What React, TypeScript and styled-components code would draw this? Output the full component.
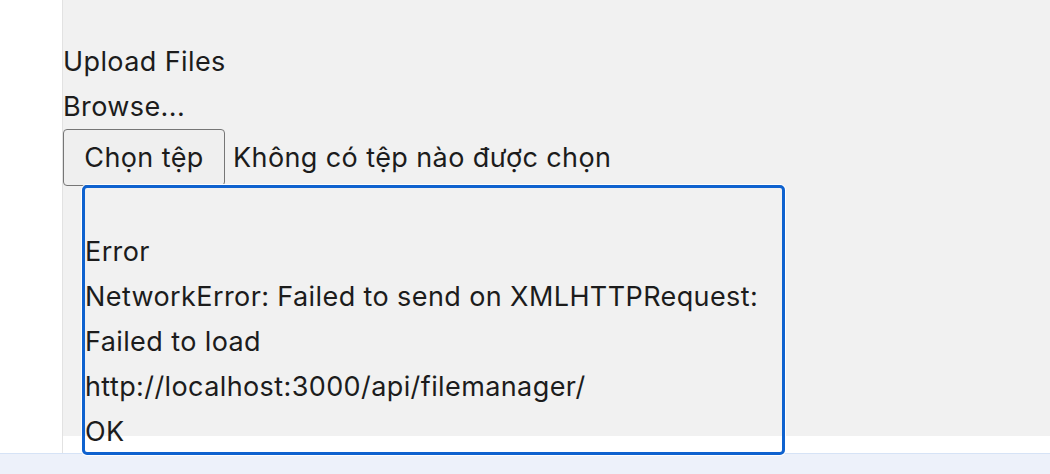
import styled, { createGlobalStyle } from 'styled-components';

const GlobalStyle = createGlobalStyle`
  html, body {
    margin: 0;
    padding: 0;
    background: #fff;
  }
  body {
    font-family: Inter, 'Noto Sans', sans-serif;
    font-size: 27px;
    letter-spacing: 0.4px;
    color: #1c1c1c;
  }
`;

const errorLines = [
  'Error',
  'NetworkError: Failed to send on XMLHTTPRequest:',
  'Failed to load',
  'http://localhost:3000/api/filemanager/',
  'OK',
];

const App = () => {
  return (
    <Layout>
      <GlobalStyle />
      <Body>
        <Sidebar />
        <Main>
          <Panel>
            <Line>Upload Files</Line>
            <Line>Browse...</Line>
            <FileRow>
              <FileButton type="button">Chọn tệp</FileButton>
              <FileStatus>Không có tệp nào được chọn</FileStatus>
            </FileRow>
            <ErrorBox tabIndex={0}>
              <Spacer />
              {errorLines.map((line, i) => (
                <Line key={i}>{line}</Line>
              ))}
            </ErrorBox>
          </Panel>
        </Main>
      </Body>
      <Footer />
    </Layout>
  );
};

export default App;

const Layout = styled.div`
  display: flex;
  flex-direction: column;
  height: 474px;
  overflow: hidden;
`;

const Body = styled.div`
  flex: 1;
  display: flex;
  min-height: 0;
`;

const Sidebar = styled.aside`
  width: 62px;
  flex-shrink: 0;
  background: #fff;
  border-right: 1px solid #e2e2e2;
`;

const Main = styled.main`
  flex: 1;
  background: #fff;
`;

const Panel = styled.section`
  height: 436px;
  box-sizing: border-box;
  padding-top: 39px;
  background: #f1f1f1;
`;

const Line = styled.div`
  line-height: 45px;
  white-space: nowrap;
`;

const Spacer = styled.div`
  height: 41px;
`;

const FileRow = styled.div`
  display: flex;
  align-items: center;
  gap: 8px;
  height: 57px;
`;

const FileButton = styled.button`
  width: 162px;
  height: 57px;
  padding: 0;
  border: 1px solid #767676;
  border-radius: 4px;
  background: #efefef;
  font: inherit;
  letter-spacing: inherit;
  color: inherit;
`;

const FileStatus = styled.span`
  line-height: 45px;
`;

const ErrorBox = styled.div`
  position: relative;
  z-index: 1;
  width: 703px;
  height: 270px;
  margin: -1px 0 0 19px;
  box-sizing: border-box;
  border: 3px solid #0f62cf;
  border-radius: 5px;
  box-shadow: 0 0 0 1px #fff;
  outline: none;
`;

const Footer = styled.footer`
  height: 20px;
  flex-shrink: 0;
  border-top: 1px solid #d6e3f6;
  background: #edf1fa;
`;
